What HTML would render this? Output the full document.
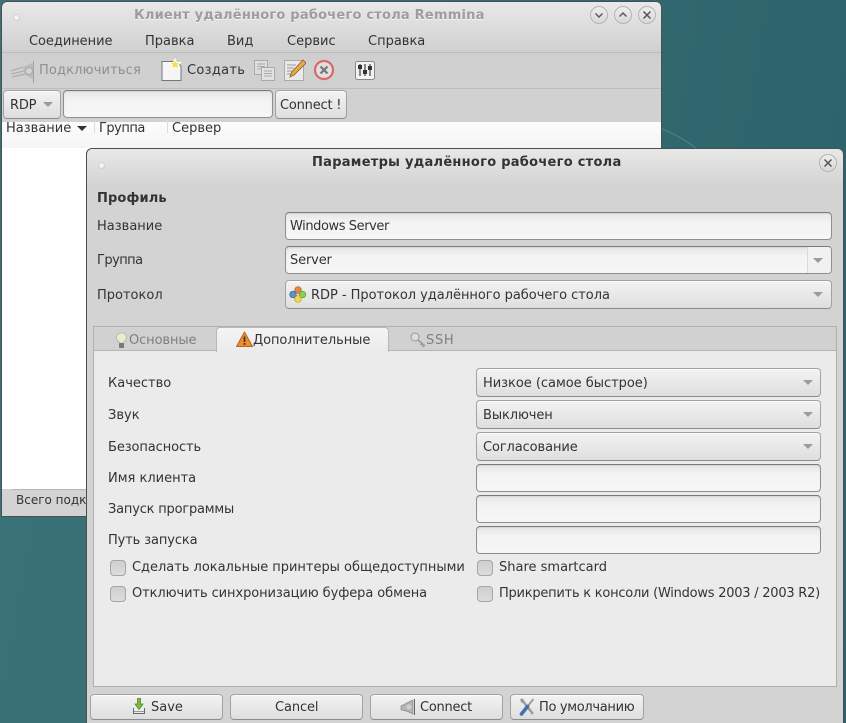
<!DOCTYPE html>
<html><head><meta charset="utf-8"><style>
html,body{margin:0;padding:0;width:846px;height:723px;overflow:hidden}
body{position:relative;background:linear-gradient(100deg,#3a7479 0%,#33696f 60%,#2b6169 100%);font-family:"DejaVu Sans",sans-serif;font-size:13px;color:#333}
.a,.t,.e,.c,.b,.k,svg{position:absolute}
.t{white-space:nowrap;line-height:16px;margin-top:1px}
.win{position:absolute;background:#d3d3d3;border:1px solid #4a4f50;border-radius:6px 6px 0 0;box-sizing:border-box}
.e{box-sizing:border-box;border:1px solid #8f8f8f;border-top-color:#7a7a7a;border-radius:4px;background:linear-gradient(#e6e6e6,#f3f3f3 35%,#f6f6f6);box-shadow:inset 0 1px 1px rgba(0,0,0,.08)}
.c,.b{box-sizing:border-box;border:1px solid #a2a2a2;border-bottom-color:#8c8c8c;border-radius:4px;background:linear-gradient(#f3f3f3,#dedede);box-shadow:inset 0 1px 0 #fbfbfb}
.k{box-sizing:border-box;width:16px;height:16px;border:1px solid #a5a5a5;border-radius:4px;background:linear-gradient(#cfcfcf,#dcdcdc)}
.ar{position:absolute;width:0;height:0;border-left:5.5px solid transparent;border-right:5.5px solid transparent;border-top:5px solid #9b9b9b}
.wb{position:absolute;box-sizing:border-box;width:18px;height:18px;border:1px solid #b5b5b5;border-radius:50%;background:linear-gradient(#eee,#d8d8d8)}
.dot{position:absolute;width:7px;height:7px;border-radius:50%;background:#f3f3f3;border:1px solid #cfcfcf;box-sizing:border-box}
.h{font-weight:bold}
</style></head><body>
<svg style="left:660px;top:125px" width="40" height="25"><path d="M2 4 Q20 11 36 23" stroke="#4f8388" fill="none"/></svg>

<!-- main window -->
<div class="win" style="left:1px;top:1px;width:661px;height:516px;background:linear-gradient(#e9e9e9,#cfcfcf 52px,#d1d1d1 88px,#d3d3d3)">
</div>
<div class="dot" style="left:13px;top:14px"></div>
<div class="t h" style="left:134px;top:7px;color:#9d9d9d;text-shadow:0 1px 0 #f4f4f4;letter-spacing:.22px">Клиент удалённого рабочего стола Remmina</div>
<div class="wb" style="left:590px;top:6px"></div><svg style="left:590px;top:6px" width="18" height="18"><path d="M5.500 7.500L9 11L12.500 7.500" stroke="#555" stroke-width="1.400" fill="none"/></svg>
<div class="wb" style="left:614px;top:6px"></div><svg style="left:614px;top:6px" width="18" height="18"><path d="M5.500 10.500L9 7L12.500 10.500" stroke="#555" stroke-width="1.400" fill="none"/></svg>
<div class="wb" style="left:638px;top:6px"></div><svg style="left:638px;top:6px" width="18" height="18"><path d="M5.500 5.500L12.500 12.500M12.500 5.500L5.500 12.500" stroke="#555" stroke-width="1.500" fill="none"/></svg>

<div class="t" style="left:29px;top:33px;letter-spacing:-.05px">Соединение</div>
<div class="t" style="left:145px;top:33px">Правка</div>
<div class="t" style="left:227px;top:33px">Вид</div>
<div class="t" style="left:287px;top:33px">Сервис</div>
<div class="t" style="left:368px;top:33px">Справка</div>
<div class="a" style="left:2px;top:52px;width:659px;height:1px;background:#bdbdbd"></div>
<div class="a" style="left:2px;top:88px;width:659px;height:1px;background:#bdbdbd"></div>

<svg style="left:9px;top:59px" width="28" height="24"><path d="M2 12L14 8M2 15L15 12M3 18L16 15" stroke="#a8a8a8" fill="none"/><path d="M14 8Q22 4 24 4V20Q20 18 15 15Z" fill="#bcbcbc"/><circle cx="20" cy="12" r="3.500" fill="#d4d4d4" stroke="#a8a8a8"/><path d="M24.500 2V24" stroke="#a3a3a3"/></svg>
<div class="t" style="left:39px;top:62px;color:#8f8f8f;letter-spacing:.15px">Подключиться</div>

<svg style="left:161px;top:58px" width="22" height="24"><path d="M1 3.500H15L20 8V22.500H1Z" fill="#f5f5f5" stroke="#777"/><path d="M14 1L15.500 4.500L19.500 4.500L16.800 7.300L18 11L14 9.300L10.500 11L11.500 7.300L8.500 4.500L12.500 4.500Z" fill="#f6e04b" stroke="#fff"/></svg>
<div class="t" style="left:187px;top:62px;color:#333;letter-spacing:.3px">Создать</div>

<svg style="left:254px;top:60px" width="21" height="21"><rect x=".5" y=".5" width="13" height="14" fill="#dedede" stroke="#aaa"/><path d="M3 4H11M3 6.500H11M3 9H11" stroke="#aaa"/><rect x="7.500" y="7.500" width="13" height="13" fill="#e2e2e2" stroke="#aaa"/><path d="M10 11H18M10 13.500H18M10 16H18" stroke="#aaa"/></svg>
<svg style="left:284px;top:59px" width="22" height="22"><rect x=".5" y="1.500" width="19" height="20" fill="#e9e9e9" stroke="#aaa"/><path d="M3 6H12M3 9H10M3 12H9M3 15H8" stroke="#999"/><path d="M19 1L22 4L10 16L6 18L7.500 13.500Z" fill="#eca94a" stroke="#8a5d25" stroke-width=".8"/></svg>
<svg style="left:313px;top:59px" width="22" height="22"><circle cx="11" cy="11" r="9" fill="#e0e0e0" stroke="#d9686a" stroke-width="2.200"/><path d="M7.500 7.500L14.500 14.500M14.500 7.500L7.500 14.500" stroke="#777" stroke-width="2.200"/></svg>
<svg style="left:355px;top:61px" width="21" height="20"><rect x=".5" y=".5" width="19" height="18" rx="2" fill="#f4f4f4" stroke="#888"/><rect x="2.500" y="3" width="15" height="12" fill="#eee"/><path d="M5 3V15M10 3V15M15 3V15" stroke="#444" stroke-width="1.200"/><rect x="3" y="4" width="4" height="4" fill="#333"/><rect x="8" y="9" width="4" height="4" fill="#333"/><rect x="13" y="5" width="4" height="4" fill="#333"/></svg>

<div class="c" style="left:3px;top:90px;width:58px;height:29px"></div>
<div class="t" style="left:10px;top:97px;letter-spacing:-.2px">RDP</div><div class="ar" style="left:43px;top:102px"></div>
<div class="e" style="left:63px;top:90px;width:210px;height:28px"></div>
<div class="b" style="left:275px;top:90px;width:72px;height:29px"></div>
<div class="t" style="left:280px;top:97px;letter-spacing:-.2px">Connect !</div>

<!-- list -->
<div class="a" style="left:2px;top:122px;width:659px;height:367px;background:#fff"></div>
<div class="a" style="left:2px;top:122px;width:659px;height:26px;background:linear-gradient(#fcfcfc,#f5f5f5)"></div>
<div class="t" style="left:6px;top:120px">Название</div>
<div class="a" style="left:77px;top:126px;width:0;height:0;border-left:5px solid transparent;border-right:5px solid transparent;border-top:5px solid #333"></div>
<div class="a" style="left:94px;top:120px;width:1px;height:13px;background:#ddd"></div>
<div class="t" style="left:99px;top:120px;letter-spacing:-.5px">Группа</div>
<div class="a" style="left:167px;top:120px;width:1px;height:13px;background:#ddd"></div>
<div class="t" style="left:172px;top:120px">Сервер</div>
<div class="a" style="left:12px;top:489px;width:80px;height:1px;background:#b5b5b5"></div>
<div class="t" style="left:16px;top:491px;font-size:12px">Всего подключений</div>

<!-- dialog -->
<div class="win" style="left:86px;top:148px;width:758px;height:575px;border-bottom:0;background:linear-gradient(#e8e8e8,#d3d3d3 38px)"></div>
<div class="dot" style="left:98px;top:162px"></div>
<div class="t h" style="left:312px;top:154px;color:#333;letter-spacing:.27px">Параметры удалённого рабочего стола</div>
<div class="wb" style="left:819px;top:154px"></div><svg style="left:819px;top:154px" width="18" height="18"><path d="M5.500 5.500L12.500 12.500M12.500 5.500L5.500 12.500" stroke="#555" stroke-width="1.500" fill="none"/></svg>

<div class="t" style="left:97px;top:190px;font-weight:bold;letter-spacing:.12px">Профиль</div>
<div class="t" style="left:97px;top:218px">Название</div>
<div class="t" style="left:97px;top:252px;letter-spacing:-.55px">Группа</div>
<div class="t" style="left:97px;top:287px">Протокол</div>

<div class="e" style="left:285px;top:212px;width:547px;height:28px"></div>
<div class="t" style="left:290px;top:218px;letter-spacing:-.42px">Windows Server</div>
<div class="e" style="left:285px;top:246px;width:547px;height:28px"></div>
<div class="a" style="left:807px;top:247px;width:1px;height:26px;background:#dadada"></div>
<div class="a" style="left:808px;top:247px;width:23px;height:26px;background:#f1f1f1;border-radius:0 3px 3px 0"></div>
<div class="t" style="left:290px;top:252px;letter-spacing:-.15px">Server</div>
<div class="ar" style="left:813px;top:258px"></div>
<div class="c" style="left:285px;top:280px;width:547px;height:29px"></div>
<svg style="left:289px;top:286px" width="18" height="17"><circle cx="9" cy="4" r="3.300" fill="#e8873e" stroke="#a8602c" stroke-width=".7"/><circle cx="4" cy="8.500" r="3.300" fill="#5f8fc9" stroke="#3e6699" stroke-width=".7"/><circle cx="13.500" cy="8.500" r="3.300" fill="#8fcf50" stroke="#5e9a2e" stroke-width=".7"/><circle cx="9" cy="13" r="3.300" fill="#f2d84a" stroke="#b79f28" stroke-width=".7"/></svg>
<div class="t" style="left:311px;top:287px;letter-spacing:-.03px">RDP - Протокол удалённого рабочего стола</div>
<div class="ar" style="left:813px;top:292px"></div>

<!-- tabs -->
<div class="a" style="left:93px;top:326px;width:744px;height:361px;box-sizing:border-box;border:1px solid #b0b0b0;background:#ebebeb"></div>
<div class="a" style="left:94px;top:327px;width:742px;height:24px;background:#d1d1d1;border-bottom:1px solid #b5b5b5;box-sizing:border-box"></div>
<div class="a" style="left:216px;top:327px;width:173px;height:25px;background:linear-gradient(#f4f4f4,#ebebeb);border:1px solid #b8b8b8;border-bottom:0;border-radius:4px 4px 0 0;box-sizing:border-box"></div>
<svg style="left:115px;top:332px" width="13" height="18"><path d="M6.500 1A4.500 4.500 0 0 1 9 9.500V11H4V9.500A4.500 4.500 0 0 1 6.500 1Z" fill="#ecead0" stroke="#b5b5a0" stroke-width=".8"/><rect x="4" y="11" width="5" height="5" rx="1" fill="#777"/></svg>
<div class="t" style="left:129px;top:332px;color:#7f7f7f;letter-spacing:-.1px">Основные</div>
<svg style="left:236px;top:331px" width="17" height="17"><path d="M8.500 1L16.500 15.500H.5Z" fill="#ee8b2c" stroke="#b8651c" stroke-linejoin="round"/><path d="M8.500 5.500V11" stroke="#333" stroke-width="1.700"/><rect x="7.600" y="12" width="1.800" height="1.800" fill="#333"/></svg>
<div class="t" style="left:253px;top:332px;color:#333;letter-spacing:-.06px">Дополнительные</div>
<svg style="left:410px;top:332px" width="17" height="16"><circle cx="5" cy="5" r="4" fill="#ddd" stroke="#999"/><path d="M8 8L15 14M12 11L10.500 13M14 13L12.500 15" stroke="#999" stroke-width="1.500" fill="none"/></svg>
<div class="t" style="left:426px;top:332px;color:#7f7f7f;letter-spacing:.7px">SSH</div>

<div class="t" style="left:108px;top:375px">Качество</div>
<div class="t" style="left:108px;top:407px">Звук</div>
<div class="t" style="left:108px;top:439px;letter-spacing:-.1px">Безопасность</div>
<div class="t" style="left:108px;top:470px">Имя клиента</div>
<div class="t" style="left:108px;top:501px;letter-spacing:-.2px">Запуск программы</div>
<div class="t" style="left:108px;top:532px;letter-spacing:-.12px">Путь запуска</div>

<div class="c" style="left:476px;top:368px;width:345px;height:29px"></div>
<div class="t" style="left:483px;top:375px;letter-spacing:-.03px">Низкое (самое быстрое)</div><div class="ar" style="left:803px;top:380px"></div>
<div class="c" style="left:476px;top:400px;width:345px;height:29px"></div>
<div class="t" style="left:483px;top:407px;letter-spacing:-.1px">Выключен</div><div class="ar" style="left:803px;top:412px"></div>
<div class="c" style="left:476px;top:432px;width:345px;height:29px"></div>
<div class="t" style="left:483px;top:439px;letter-spacing:-.1px">Согласование</div><div class="ar" style="left:803px;top:444px"></div>
<div class="e" style="left:476px;top:464px;width:345px;height:28px"></div>
<div class="e" style="left:476px;top:495px;width:345px;height:28px"></div>
<div class="e" style="left:476px;top:526px;width:345px;height:28px"></div>

<div class="k" style="left:110px;top:560px"></div>
<div class="t" style="left:132px;top:559px;letter-spacing:-.02px">Сделать локальные принтеры общедоступными</div>
<div class="k" style="left:110px;top:586px"></div>
<div class="t" style="left:132px;top:585px;letter-spacing:-.08px">Отключить синхронизацию буфера обмена</div>
<div class="k" style="left:477px;top:560px"></div>
<div class="t" style="left:499px;top:559px">Share smartcard</div>
<div class="k" style="left:477px;top:586px"></div>
<div class="t" style="left:499px;top:585px;letter-spacing:-.24px">Прикрепить к консоли (Windows 2003 / 2003 R2)</div>

<!-- buttons -->
<div class="b" style="left:90px;top:694px;width:133px;height:26px"></div>
<svg style="left:132px;top:698px" width="14" height="17"><path d="M1.500 10V15.500H12.500V10" fill="#eee" stroke="#666"/><path d="M5.500 .5H8.500V6H11L7 11.500L3 6H5.500Z" fill="#7cbb3c" stroke="#4e8a22" stroke-width=".8"/><path d="M2 13.500H12" stroke="#999"/></svg>
<div class="t" style="left:151px;top:699px">Save</div>
<div class="b" style="left:230px;top:694px;width:133px;height:26px"></div>
<div class="t" style="left:275px;top:699px;letter-spacing:-.1px">Cancel</div>
<div class="b" style="left:370px;top:694px;width:133px;height:26px"></div>
<svg style="left:399px;top:698px" width="18" height="18"><path d="M2 8L9 4.500L14 2V16L9 13.500L2 12Z" fill="#b5b5b5" stroke="#8a8a8a" stroke-width=".7"/><circle cx="10" cy="9" r="2.500" fill="#cfcfcf"/><path d="M15.500 1V17" stroke="#666"/></svg>
<div class="t" style="left:420px;top:699px;letter-spacing:-.25px">Connect</div>
<div class="b" style="left:510px;top:694px;width:134px;height:26px"></div>
<svg style="left:518px;top:697px" width="18" height="20"><path d="M4 3L15 17" stroke="#9a9a9a" stroke-width="2.400"/><path d="M2 2L5 1.500L6.500 5L3.500 6Z" fill="#9a9a9a"/><path d="M15.500 2L9 10" stroke="#9a9a9a" stroke-width="1.800"/><path d="M9.500 9.500L3.500 17" stroke="#3f72ad" stroke-width="3.600" stroke-linecap="round"/></svg>
<div class="t" style="left:539px;top:699px;letter-spacing:-.32px">По умолчанию</div>
</body></html>
